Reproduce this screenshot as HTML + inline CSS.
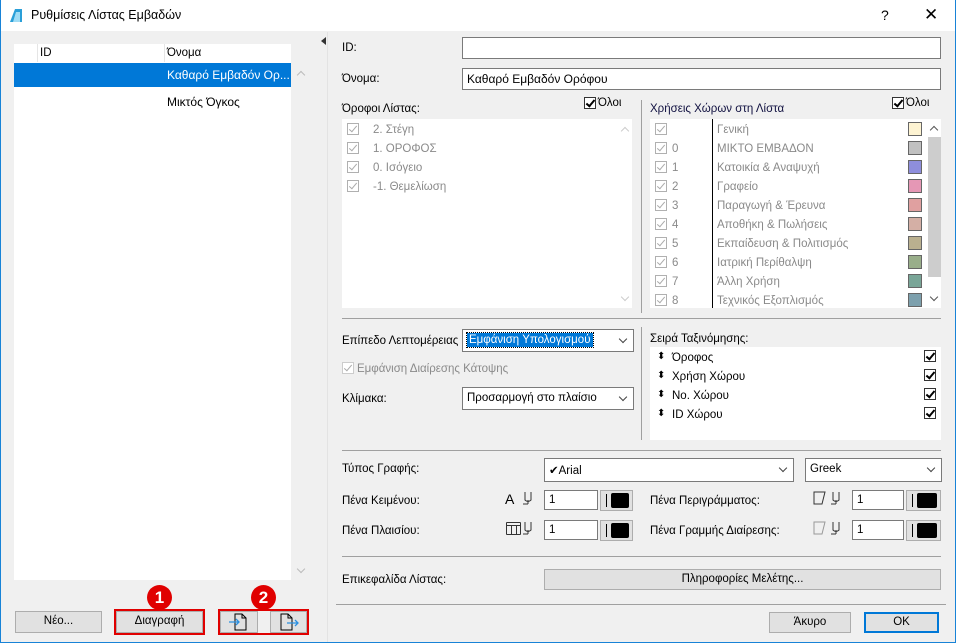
<!DOCTYPE html>
<html><head><meta charset="utf-8"><style>
*{box-sizing:border-box;margin:0;padding:0}
body{width:956px;height:643px;background:#f0f0f0;font-family:"Liberation Sans",sans-serif;font-size:11.5px;color:#000;position:relative;overflow:hidden}
.a{position:absolute;white-space:nowrap}
.w{position:absolute;background:#fff}
.in{position:absolute;background:#fff;border:1px solid #7a7a7a;padding:3px 4px}
.btn{position:absolute;background:#e1e1e1;border:1px solid #adadad;text-align:center;line-height:19px}
.sel{position:absolute;background:#fff;border:1px solid #7a7a7a;padding:4px 4px}
.sel:after{content:"";position:absolute;right:7px;top:6px;width:5px;height:5px;border-right:1px solid #444;border-bottom:1px solid #444;transform:rotate(45deg)}
.cb{position:absolute;width:12px;height:12px;border:1px solid #b0b0b0;background:#fff}
.cb:after{content:"";position:absolute;left:3px;top:0px;width:3px;height:7px;border-right:1.5px solid #aaa;border-bottom:1.5px solid #aaa;transform:rotate(40deg)}
.cbk{position:absolute;width:12px;height:12px;border:1px solid #333;background:#fff}
.cbk:after{content:"";position:absolute;left:3px;top:0px;width:3px;height:7px;border-right:2px solid #000;border-bottom:2px solid #000;transform:rotate(40deg)}
.g{color:#8a8a8a}
.hl{position:absolute;height:1px;background:#a0a0a0}
.vl{position:absolute;width:1px;background:#a0a0a0}
.sw{position:absolute;width:14px;height:14px;border:1px solid #666}
.pen{position:absolute;background:#e1e1e1;border:1px solid #adadad}
.pen:before{content:"";position:absolute;left:5px;top:3px;width:1px;height:13px;background:#000}
.pen:after{content:"";position:absolute;left:10px;top:2px;right:3px;bottom:2px;background:#000;border-radius:2px}
.red{position:absolute;border:2px solid #e00000}
.bd{position:absolute;width:25px;height:25px;border-radius:50%;background:#e00000;color:#fff;font-weight:bold;font-size:17px;text-align:center;line-height:25px}
.up,.dn{position:absolute;width:6px;height:6px;border-left:1.5px solid #555;border-top:1.5px solid #555;transform:rotate(45deg)}
.dn{transform:rotate(225deg)}
.pi{position:absolute}
</style></head><body>
<div class="w" style="left:0;top:0;width:956px;height:31px"></div>
<div style="position:absolute;left:0;top:0;width:1px;height:643px;background:#1883d7"></div>
<div style="position:absolute;right:0;top:0;width:1px;height:643px;background:#1883d7"></div>
<div style="position:absolute;left:0;bottom:0;width:956px;height:1px;background:#1883d7"></div>
<svg class="a" style="left:9px;top:8px" width="14" height="15"><path d="M1 14 L6 1 L13 1 L13 14 Z" fill="#2a9fd8"/><path d="M4 14 L7 4 L11 4 L11 14Z" fill="#9fdcf5"/></svg>
<div class="a" style="left:31px;top:8px;font-size:12.5px">Ρυθμίσεις Λίστας Εμβαδών</div>
<div class="a" style="left:881px;top:7px;font-size:14px">?</div>
<div class="a" style="left:924px;top:5px;font-size:17px">✕</div>

<div class="w" style="left:14px;top:44px;width:277px;height:536px"></div>
<div class="vl" style="left:37px;top:44px;height:18px;background:#e5e5e5"></div>
<div class="vl" style="left:164px;top:44px;height:18px;background:#e5e5e5"></div>
<div class="a" style="left:40px;top:47px">ID</div>
<div class="a" style="left:167px;top:47px">Όνομα</div>
<div style="position:absolute;left:14px;top:63px;width:277px;height:24px;background:#0078d7"></div>
<div class="a" style="left:167px;top:68px;color:#fff;font-size:12px">Καθαρό Εμβαδόν Ορ...</div>
<div class="a" style="left:167px;top:95px;font-size:12px">Μικτός Όγκος</div>
<div class="up" style="left:298px;top:72px;border-color:#bbb"></div>
<div class="dn" style="left:298px;top:566px;border-color:#bbb"></div>

<div class="btn" style="left:15px;top:611px;width:87px;height:22px">Νέο...</div>
<div class="btn" style="left:116px;top:611px;width:87px;height:22px">Διαγραφή</div>
<div class="btn" style="left:220px;top:611px;width:38px;height:22px"></div>
<div class="btn" style="left:270px;top:611px;width:37px;height:22px"></div>
<svg class="a" style="left:228px;top:613px" width="22" height="18"><path d="M7 1 H14 L18 5 V17 H7 Z M14 1 V5 H18" fill="none" stroke="#000"/><path d="M1 9 H11 M8 6 L11 9 L8 12" fill="none" stroke="#2a8fe0" stroke-width="1.3"/></svg>
<svg class="a" style="left:279px;top:613px" width="22" height="18"><path d="M2 1 H9 L13 5 V17 H2 Z M9 1 V5 H13" fill="none" stroke="#000"/><path d="M8 10 H19 M16 7 L19 10 L16 13" fill="none" stroke="#2a8fe0" stroke-width="1.3"/></svg>
<div class="red" style="left:114px;top:609px;width:91px;height:26px"></div>
<div class="red" style="left:218px;top:609px;width:91px;height:26px"></div>
<div class="bd" style="left:147px;top:585px">1</div>
<div class="bd" style="left:251px;top:585px">2</div>

<div class="vl" style="left:327px;top:32px;height:610px;background:#e3e3e3"></div>
<svg class="a" style="left:321px;top:37px" width="6" height="8"><path d="M5 0 L0 4 L5 8Z" fill="#333"/></svg>

<div class="a" style="left:342px;top:42px">ID:</div>
<div class="in" style="left:462px;top:37px;width:479px;height:22px"></div>
<div class="a" style="left:342px;top:73px">Όνομα:</div>
<div class="in" style="left:462px;top:68px;width:479px;height:22px;font-size:12px">Καθαρό Εμβαδόν Ορόφου</div>

<div class="a" style="left:342px;top:103px">Όροφοι Λίστας:</div>
<div class="cbk" style="left:584px;top:97px"></div><div class="a" style="left:598px;top:97px">Όλοι</div>
<div class="w" style="left:342px;top:119px;width:290px;height:189px"></div>
<div class="up" style="left:622px;top:128px;border-color:#ccc"></div>
<div class="dn" style="left:622px;top:294px;border-color:#ccc"></div>
<div class="cb" style="left:347px;top:123px"></div><div class="a g" style="left:373px;top:124px">2. Στέγη</div>
<div class="cb" style="left:347px;top:142px"></div><div class="a g" style="left:373px;top:143px">1. ΟΡΟΦΟΣ</div>
<div class="cb" style="left:347px;top:161px"></div><div class="a g" style="left:373px;top:162px">0. Ισόγειο</div>
<div class="cb" style="left:347px;top:180px"></div><div class="a g" style="left:373px;top:181px">-1. Θεμελίωση</div>

<div class="vl" style="left:641px;top:100px;height:213px"></div>
<div class="a" style="left:650px;top:103px;color:#101040">Χρήσεις Χώρων στη Λίστα</div>
<div class="cbk" style="left:892px;top:97px"></div><div class="a" style="left:906px;top:97px">Όλοι</div>
<div class="w" style="left:650px;top:119px;width:291px;height:189px"></div>
<div class="vl" style="left:712px;top:119px;height:189px;background:#000"></div>
<div style="position:absolute;left:928px;top:137px;width:13px;height:140px;background:#cdcdcd"></div>
<div class="up" style="left:931px;top:127px"></div>
<div class="dn" style="left:931px;top:294px"></div>

<div class="cb" style="left:655px;top:123px"></div><div class="a g" style="left:717px;top:124px">Γενική</div><div class="sw" style="left:908px;top:122px;background:#fdf3d2"></div>
<div class="cb" style="left:655px;top:142px"></div><div class="a g" style="left:672px;top:143px">0</div><div class="a g" style="left:717px;top:143px">ΜΙΚΤΟ ΕΜΒΑΔΟΝ</div><div class="sw" style="left:908px;top:141px;background:#c0c0c0"></div>
<div class="cb" style="left:655px;top:161px"></div><div class="a g" style="left:672px;top:162px">1</div><div class="a g" style="left:717px;top:162px">Κατοικία &amp; Αναψυχή</div><div class="sw" style="left:908px;top:160px;background:#8e8edc"></div>
<div class="cb" style="left:655px;top:180px"></div><div class="a g" style="left:672px;top:181px">2</div><div class="a g" style="left:717px;top:181px">Γραφείο</div><div class="sw" style="left:908px;top:179px;background:#e597b5"></div>
<div class="cb" style="left:655px;top:199px"></div><div class="a g" style="left:672px;top:200px">3</div><div class="a g" style="left:717px;top:200px">Παραγωγή &amp; Έρευνα</div><div class="sw" style="left:908px;top:198px;background:#e0a0a0"></div>
<div class="cb" style="left:655px;top:218px"></div><div class="a g" style="left:672px;top:219px">4</div><div class="a g" style="left:717px;top:219px">Αποθήκη &amp; Πωλήσεις</div><div class="sw" style="left:908px;top:217px;background:#d4afa5"></div>
<div class="cb" style="left:655px;top:237px"></div><div class="a g" style="left:672px;top:238px">5</div><div class="a g" style="left:717px;top:238px">Εκπαίδευση &amp; Πολιτισμός</div><div class="sw" style="left:908px;top:236px;background:#bab08f"></div>
<div class="cb" style="left:655px;top:256px"></div><div class="a g" style="left:672px;top:257px">6</div><div class="a g" style="left:717px;top:257px">Ιατρική Περίθαλψη</div><div class="sw" style="left:908px;top:255px;background:#99ae8a"></div>
<div class="cb" style="left:655px;top:275px"></div><div class="a g" style="left:672px;top:276px">7</div><div class="a g" style="left:717px;top:276px">Άλλη Χρήση</div><div class="sw" style="left:908px;top:274px;background:#79a597"></div>
<div class="cb" style="left:655px;top:294px"></div><div class="a g" style="left:672px;top:295px">8</div><div class="a g" style="left:717px;top:295px">Τεχνικός Εξοπλισμός</div><div class="sw" style="left:908px;top:293px;background:#7da0ad"></div>

<div class="hl" style="left:342px;top:318px;width:599px"></div>

<div class="a" style="left:342px;top:335px">Επίπεδο Λεπτομέρειας</div>
<div class="sel" style="left:462px;top:329px;width:172px;height:23px"><span style="background:#0078d7;color:#fff;padding:1px 2px;outline:1px dotted #000">Εμφάνιση Υπολογισμού</span></div>
<div class="cb" style="left:342px;top:362px;border-color:#ccc"></div><div class="a g" style="left:357px;top:363px">Εμφάνιση Διαίρεσης Κάτοψης</div>
<div class="a" style="left:342px;top:393px">Κλίμακα:</div>
<div class="sel" style="left:462px;top:387px;width:172px;height:23px">Προσαρμογή στο πλαίσιο</div>

<div class="vl" style="left:641px;top:327px;height:113px"></div>
<div class="a" style="left:650px;top:333px">Σειρά Ταξινόμησης:</div>
<div class="w" style="left:650px;top:347px;width:291px;height:93px"></div>
<div class="a" style="left:657px;top:351px;font-size:10px">⬍</div><div class="a" style="left:672px;top:352px">Όροφος</div><div class="cbk" style="left:924px;top:350px"></div>
<div class="a" style="left:657px;top:370px;font-size:10px">⬍</div><div class="a" style="left:672px;top:371px">Χρήση Χώρου</div><div class="cbk" style="left:924px;top:369px"></div>
<div class="a" style="left:657px;top:389px;font-size:10px">⬍</div><div class="a" style="left:672px;top:390px">Νο. Χώρου</div><div class="cbk" style="left:924px;top:388px"></div>
<div class="a" style="left:657px;top:408px;font-size:10px">⬍</div><div class="a" style="left:672px;top:409px">ID Χώρου</div><div class="cbk" style="left:924px;top:407px"></div>

<div class="hl" style="left:342px;top:450px;width:599px"></div>

<div class="a" style="left:342px;top:463px">Τύπος Γραφής:</div>
<div class="sel" style="left:544px;top:458px;width:250px;height:24px">✔Arial</div>
<div class="sel" style="left:805px;top:458px;width:137px;height:24px">Greek</div>

<div class="a" style="left:342px;top:495px">Πένα Κειμένου:</div>
<div class="a" style="left:505px;top:491px;font-size:14px">A</div>
<svg class="pi" style="left:520px;top:491px" width="14" height="15"><path d="M5 1 V9 Q8 12 11 9 V1 M3 13 H8 M8 9 V13" fill="none" stroke="#333"/></svg>
<div class="in" style="left:544px;top:490px;width:54px;height:20px">1</div>
<div class="pen" style="left:600px;top:490px;width:33px;height:21px"></div>
<div class="a" style="left:650px;top:495px">Πένα Περιγράμματος:</div>
<svg class="a" style="left:813px;top:491px" width="14" height="14"><path d="M1 1 H12 L9 13 H1 Z" fill="none" stroke="#333"/></svg>
<svg class="pi" style="left:828px;top:491px" width="14" height="15"><path d="M5 1 V9 Q8 12 11 9 V1 M3 13 H8 M8 9 V13" fill="none" stroke="#333"/></svg>
<div class="in" style="left:852px;top:490px;width:52px;height:20px">1</div>
<div class="pen" style="left:906px;top:490px;width:35px;height:21px"></div>

<div class="a" style="left:342px;top:525px">Πένα Πλαισίου:</div>
<svg class="a" style="left:506px;top:521px" width="15" height="14"><path d="M0.5 1.5 H14.5 M0.5 4.5 H14.5 M0.5 13.5 H14.5 M0.5 1.5 V13.5 M5.5 4.5 V13.5 M10.5 4.5 V13.5 M14.5 1.5 V13.5" fill="none" stroke="#333"/></svg>
<svg class="pi" style="left:520px;top:521px" width="14" height="15"><path d="M5 1 V9 Q8 12 11 9 V1 M3 13 H8 M8 9 V13" fill="none" stroke="#333"/></svg>
<div class="in" style="left:544px;top:520px;width:54px;height:20px">1</div>
<div class="pen" style="left:600px;top:520px;width:33px;height:21px"></div>
<div class="a" style="left:650px;top:525px">Πένα Γραμμής Διαίρεσης:</div>
<svg class="a" style="left:813px;top:521px" width="14" height="14"><path d="M1 1 H12 L9 13 H1 Z" fill="none" stroke="#999"/></svg>
<svg class="pi" style="left:828px;top:521px" width="14" height="15"><path d="M5 1 V9 Q8 12 11 9 V1 M3 13 H8 M8 9 V13" fill="none" stroke="#333"/></svg>
<div class="in" style="left:852px;top:520px;width:52px;height:20px">1</div>
<div class="pen" style="left:906px;top:520px;width:35px;height:21px"></div>

<div class="hl" style="left:342px;top:556px;width:599px"></div>
<div class="a" style="left:342px;top:574px">Επικεφαλίδα Λίστας:</div>
<div class="btn" style="left:544px;top:569px;width:397px;height:21px">Πληροφορίες Μελέτης...</div>

<div class="hl" style="left:336px;top:604px;width:610px"></div>
<div class="btn" style="left:769px;top:612px;width:82px;height:21px">Άκυρο</div>
<div class="btn" style="left:864px;top:612px;width:75px;height:21px;border:2px solid #0078d7;line-height:17px">OK</div>
</body></html>
